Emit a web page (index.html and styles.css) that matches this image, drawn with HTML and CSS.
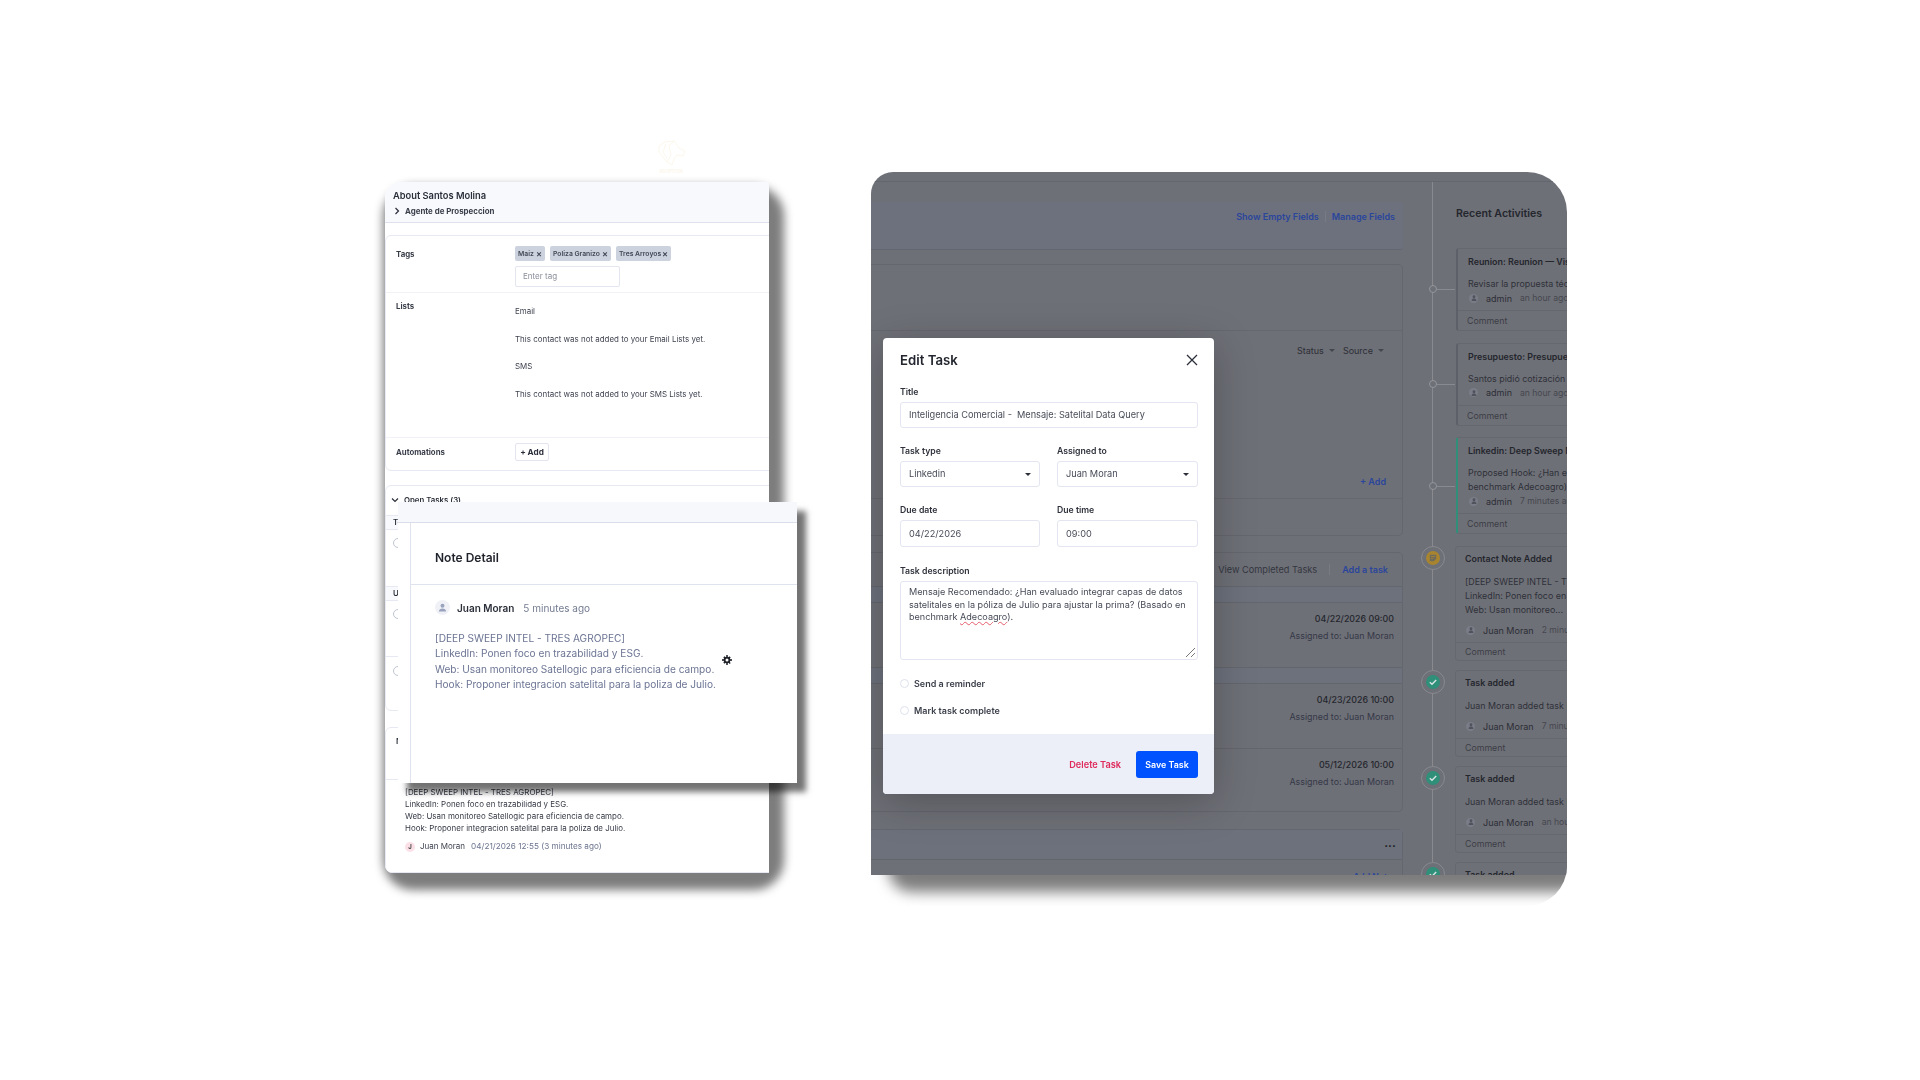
FILE: index.html
```html
<!DOCTYPE html>
<html lang="en">
<head>
    <meta charset="UTF-8">
    <title>Contact tasks and notes</title>
    <link rel="stylesheet" href="styles.css">
</head>
<body>
<div class="stage">

    <svg class="logo" viewBox="0 0 34 34" width="34" height="34" fill="none" stroke="#fbf3e3" stroke-width="0.7">
        <path d="M5 6 L11 2 L20 1 L25 8 L31 11 L29 16 L23 15 L20 19 L18 25 L13 22 L5 12 Z"/>
        <path d="M12 4 L9 12 L13 18 M20 1 L15 6 L17 15 L13 22"/>
        <text x="17" y="33" text-anchor="middle" class="logo-text">ADOPTION</text>
    </svg>

    <div class="shot shot-left">
        <div class="contact">
            <div class="contact-head">
                <div class="contact-name">About Santos Molina</div>
                <div class="contact-sub">
                    <svg width="6" height="8" viewBox="0 0 6 8" fill="none" stroke="#2b2f3a" stroke-width="1.2"><path d="M1.5 1 L4.5 4 L1.5 7"/></svg>
                    <span>Agente de Prospeccion</span>
                </div>
            </div>

            <div class="box box-about">
                <div class="row row-tags">
                    <div class="row-label">Tags</div>
                    <div class="row-value">
                        <div class="chips">
                            <span class="chip chip-a">Maiz <i>×</i></span>
                            <span class="chip chip-b">Poliza Granizo <i>×</i></span>
                            <span class="chip chip-c">Tres Arroyos <i>×</i></span>
                        </div>
                        <div class="tag-input">Enter tag</div>
                    </div>
                </div>
                <div class="row row-lists">
                    <div class="row-label">Lists</div>
                    <div class="row-value lists">
                        <div>Email</div>
                        <div>This contact was not added to your Email Lists yet.</div>
                        <div>SMS</div>
                        <div>This contact was not added to your SMS Lists yet.</div>
                    </div>
                </div>
                <div class="row row-auto">
                    <div class="row-label">Automations</div>
                    <div class="row-value"><span class="add-btn">+ Add</span></div>
                </div>
            </div>

            <div class="box box-tasks">
                <div class="tasks-title">
                    <svg width="8" height="6" viewBox="0 0 8 6" fill="none" stroke="#2b2f3a" stroke-width="1.2"><path d="M1 1.5 L4 4.5 L7 1.5"/></svg>
                    <span>Open Tasks (3)</span>
                </div>
                <div class="tasks-strip">Today</div>
                <div class="tasks-row"><span class="tick"></span></div>
                <div class="tasks-strip">Upcoming</div>
                <div class="tasks-row tasks-row-b"><span class="tick"></span></div>
                <div class="tasks-row tasks-row-c"><span class="tick"></span></div>
            </div>

            <div class="box box-notes">
                <div class="notes-head">Notes</div>
                <div class="notes-body">
                    <div class="notes-text">
                        <div>[DEEP SWEEP INTEL - TRES AGROPEC]</div>
                        <div>LinkedIn: Ponen foco en trazabilidad y ESG.</div>
                        <div>Web: Usan monitoreo Satellogic para eficiencia de campo.</div>
                        <div>Hook: Proponer integracion satelital para la poliza de Julio.</div>
                    </div>
                    <div class="notes-meta">
                        <span class="initial">J</span>
                        <span class="notes-author">Juan Moran</span>
                        <span class="notes-date">04/21/2026 12:55 (3 minutes ago)</span>
                    </div>
                </div>
            </div>
        </div>
    </div>

    <div class="note-panel">
        <div class="note-strip"></div>
        <div class="note-inner">
            <div class="note-title">Note Detail</div>
            <div class="note-content">
                <div class="note-author">
                    <span class="avatar avatar-lg">
                        <svg width="9" height="9" viewBox="0 0 10 10" fill="#9aa3bd"><circle cx="5" cy="3" r="2.2"/><path d="M1 9.5 C1 7 3 6 5 6 C7 6 9 7 9 9.5 Z"/></svg>
                    </span>
                    <b>Juan Moran</b>
                    <span>5 minutes ago</span>
                </div>
                <div class="note-text">
                    <div>[DEEP SWEEP INTEL - TRES AGROPEC]</div>
                    <div>LinkedIn: Ponen foco en trazabilidad y ESG.</div>
                    <div>Web: Usan monitoreo Satellogic para eficiencia de campo.</div>
                    <div>Hook: Proponer integracion satelital para la poliza de Julio.</div>
                </div>
            </div>
        </div>
        <svg class="gear" width="10" height="10" viewBox="0 0 10 10">
            <circle cx="5" cy="5" r="2.4" fill="none" stroke="#1c1f26" stroke-width="1.8"/>
            <path d="M4 0.2h2v1.6H4zM4 8.2h2v1.6H4zM0.2 4h1.6v2H0.2zM8.2 4h1.6v2H8.2zM1.3 2.5l1.2-1.2 1 1-1.2 1.2zM6.5 2.3l1-1 1.2 1.2-1 1zM1.3 7.5l1-1 1.2 1.2-1 1zM6.5 7.7l1-1 1.2 1.2-1 1z" fill="#1c1f26"/>
        </svg>
    </div>

    <div class="shot shot-right">
        <div class="app">
            <div class="app-top"></div>
            <div class="app-body">
                <div class="main">
                    <div class="fields-head">
                        <a>Show Empty Fields</a>
                        <span class="sep"></span>
                        <a>Manage Fields</a>
                    </div>

                    <div class="dim-card fields-card">
                        <div class="fields-a"></div>
                        <div class="fields-b">
                            <div class="filters">
                                <span>Status</span><em class="caret"></em>
                                <span>Source</span><em class="caret"></em>
                            </div>
                            <a class="add-link">+ Add</a>
                        </div>
                    </div>

                    <div class="dim-card task-card">
                        <div class="task-head">
                            <span>View Completed Tasks</span>
                            <span class="sep"></span>
                            <a>Add a task</a>
                        </div>
                        <div class="strip"></div>
                        <div class="task-row">
                            <b>04/22/2026 09:00</b>
                            <span>Assigned to: Juan Moran</span>
                        </div>
                        <div class="strip"></div>
                        <div class="task-row">
                            <b>04/23/2026 10:00</b>
                            <span>Assigned to: Juan Moran</span>
                        </div>
                        <div class="task-row task-row-line">
                            <b>05/12/2026 10:00</b>
                            <span>Assigned to: Juan Moran</span>
                        </div>
                    </div>

                    <div class="dim-card note-card">
                        <div class="note-card-head"><span class="dots">•••</span></div>
                        <div class="note-card-link"><a>Add Note</a></div>
                    </div>
                </div>

                <div class="activity">
                    <h3>Recent Activities</h3>

                    <div class="act act-plain">
                        <span class="dot"></span>
                        <div class="act-title">Reunion: Reunion — Visita técnica</div>
                        <div class="act-body">Revisar la propuesta técnica del campo</div>
                        <div class="act-who"><span class="avatar"><svg width="6" height="6" viewBox="0 0 10 10" fill="#50535c"><circle cx="5" cy="3" r="2.4"/><path d="M1 10 C1 7 3 6 5 6 C7 6 9 7 9 10 Z"/></svg></span>admin <small>an hour ago</small></div>
                        <div class="act-comment">Comment</div>
                    </div>

                    <div class="act act-plain">
                        <span class="dot"></span>
                        <div class="act-title">Presupuesto: Presupuesto póliza</div>
                        <div class="act-body">Santos pidió cotización para la póliza</div>
                        <div class="act-who"><span class="avatar"><svg width="6" height="6" viewBox="0 0 10 10" fill="#50535c"><circle cx="5" cy="3" r="2.4"/><path d="M1 10 C1 7 3 6 5 6 C7 6 9 7 9 10 Z"/></svg></span>admin <small>an hour ago</small></div>
                        <div class="act-comment">Comment</div>
                    </div>

                    <div class="act act-plain act-green">
                        <span class="dot dot-low"></span>
                        <div class="act-title">Linkedin: Deep Sweep Mensaje</div>
                        <div class="act-body">Proposed Hook: ¿Han evaluado integrar<br>benchmark Adecoagro).</div>
                        <div class="act-who"><span class="avatar"><svg width="6" height="6" viewBox="0 0 10 10" fill="#50535c"><circle cx="5" cy="3" r="2.4"/><path d="M1 10 C1 7 3 6 5 6 C7 6 9 7 9 10 Z"/></svg></span>admin <small>7 minutes ago</small></div>
                        <div class="act-comment">Comment</div>
                    </div>

                    <div class="act act-note">
                        <span class="badge badge-yellow">
                            <svg width="14" height="14" viewBox="0 0 14 14"><circle cx="7" cy="7" r="7" fill="#a8842f"/><path d="M3.8 3.8h6.4v4L7.8 10.2H3.8z" fill="#6e6a5c"/><path d="M5 5.5h4M5 7.3h2.4" stroke="#a8842f" stroke-width="0.8"/></svg>
                        </span>
                        <div class="act-title">Contact Note Added</div>
                        <div class="act-body">[DEEP SWEEP INTEL - TRES AGROPEC]<br>LinkedIn: Ponen foco en trazabilidad<br>Web: Usan monitoreo...</div>
                        <div class="act-who"><span class="avatar"><svg width="6" height="6" viewBox="0 0 10 10" fill="#50535c"><circle cx="5" cy="3" r="2.4"/><path d="M1 10 C1 7 3 6 5 6 C7 6 9 7 9 10 Z"/></svg></span>Juan Moran <small>2 minutes ago</small></div>
                        <div class="act-comment">Comment</div>
                    </div>

                    <div class="act act-note">
                        <span class="badge badge-green">
                            <svg width="14" height="14" viewBox="0 0 14 14"><circle cx="7" cy="7" r="7" fill="#2f8f78"/><path d="M3.8 7.2 L6 9.3 L10.2 5" fill="none" stroke="#d8e4e4" stroke-width="1.4"/></svg>
                        </span>
                        <div class="act-title">Task added</div>
                        <div class="act-body">Juan Moran added task Inteligencia</div>
                        <div class="act-who"><span class="avatar"><svg width="6" height="6" viewBox="0 0 10 10" fill="#50535c"><circle cx="5" cy="3" r="2.4"/><path d="M1 10 C1 7 3 6 5 6 C7 6 9 7 9 10 Z"/></svg></span>Juan Moran <small>7 minutes ago</small></div>
                        <div class="act-comment">Comment</div>
                    </div>

                    <div class="act act-note">
                        <span class="badge badge-green">
                            <svg width="14" height="14" viewBox="0 0 14 14"><circle cx="7" cy="7" r="7" fill="#2f8f78"/><path d="M3.8 7.2 L6 9.3 L10.2 5" fill="none" stroke="#d8e4e4" stroke-width="1.4"/></svg>
                        </span>
                        <div class="act-title">Task added</div>
                        <div class="act-body">Juan Moran added task Inteligencia</div>
                        <div class="act-who"><span class="avatar"><svg width="6" height="6" viewBox="0 0 10 10" fill="#50535c"><circle cx="5" cy="3" r="2.4"/><path d="M1 10 C1 7 3 6 5 6 C7 6 9 7 9 10 Z"/></svg></span>Juan Moran <small>an hour ago</small></div>
                        <div class="act-comment">Comment</div>
                    </div>

                    <div class="act act-note">
                        <span class="badge badge-green">
                            <svg width="14" height="14" viewBox="0 0 14 14"><circle cx="7" cy="7" r="7" fill="#2f8f78"/><path d="M3.8 7.2 L6 9.3 L10.2 5" fill="none" stroke="#d8e4e4" stroke-width="1.4"/></svg>
                        </span>
                        <div class="act-title">Task added</div>
                    </div>
                </div>
            </div>

            <div class="modal">
                <div class="modal-body">
                    <div class="modal-head">
                        <h2>Edit Task</h2>
                        <svg width="12" height="12" viewBox="0 0 12 12" stroke="#2b2f3a" stroke-width="1.3"><path d="M1 1 L11 11 M11 1 L1 11"/></svg>
                    </div>
                    <label class="field-label">Title</label>
                    <div class="input">Inteligencia Comercial -&nbsp; Mensaje: Satelital Data Query</div>
                    <div class="field-grid">
                        <div>
                            <label class="field-label">Task type</label>
                            <div class="input input-select">Linkedin<em class="caret caret-dark"></em></div>
                        </div>
                        <div>
                            <label class="field-label">Assigned to</label>
                            <div class="input input-select">Juan Moran<em class="caret caret-dark"></em></div>
                        </div>
                        <div>
                            <label class="field-label">Due date</label>
                            <div class="input input-tall">04/22/2026</div>
                        </div>
                        <div>
                            <label class="field-label">Due time</label>
                            <div class="input input-tall">09:00</div>
                        </div>
                    </div>
                    <label class="field-label">Task description</label>
                    <div class="textarea">
                        Mensaje Recomendado: ¿Han evaluado integrar capas de datos<br>
                        satelitales en la póliza de Julio para ajustar la prima? (Basado en<br>
                        benchmark <span class="misspelled">Adecoagro</span>).
                        <svg class="grip" width="11" height="11" viewBox="0 0 11 11" stroke="#555" stroke-width="0.8"><path d="M1 10 L10 1 M6 10 L10 6"/></svg>
                    </div>
                    <div class="checks">
                        <div class="check-row"><span class="check"></span>Send a reminder</div>
                        <div class="check-row"><span class="check"></span>Mark task complete</div>
                    </div>
                </div>
                <div class="modal-foot">
                    <a class="delete">Delete Task</a>
                    <button class="save">Save Task</button>
                </div>
            </div>
        </div>
    </div>
</div>
</body>
</html>
```

FILE: styles.css
```css
* {
    box-sizing: border-box;
}

body {
    margin: 0;
    background-color: #fff;
    font-family: "Inter", "Liberation Sans", sans-serif;
    color: #2b2f3a;
    overflow: hidden;
}

.stage {
    position: relative;
    width: 1920px;
    height: 1080px;
    overflow: hidden;
}

a {
    color: #2a459c;
}

.logo {
    position: absolute;
    left: 654px;
    top: 140px;
}

.logo-text {
    font-size: 4.5px;
    fill: #fbf3e3;
    stroke: none;
}

/* left screenshot */
.shot-left {
    position: absolute;
    left: 380px;
    top: 178px;
    width: 420px;
    height: 725px;
}

.shot-left::before {
    content: "";
    position: absolute;
    left: 3px;
    top: 8px;
    width: 401px;
    height: 704px;
    border-radius: 30px;
    background-color: #7d7d7d;
    filter: blur(5px);
}

.contact {
    position: absolute;
    left: 5px;
    top: 4px;
    width: 384px;
    height: 691px;
    overflow: hidden;
    background-color: #fff;
    border-radius: 16px 0 0 8px;
    filter: blur(0.3px);
}

.contact-head {
    height: 41px;
    padding: 7px 8px 0;
    background-color: #f8f9fd;
    border-bottom: 1px solid #dfe2ec;
}

.contact-name {
    font-size: 9.3px;
    font-weight: 600;
    line-height: 13px;
}

.contact-sub {
    display: flex;
    align-items: center;
    gap: 5px;
    margin-top: 4px;
    padding-left: 1px;
    font-size: 7.9px;
    font-weight: 700;
    line-height: 10px;
    color: #3a3e4a;
}

.box {
    border: 1px solid #e6e9f2;
    border-radius: 6px 0 0 6px;
    margin-right: -10px;
    background-color: #fff;
}

.box-about {
    margin-top: 12px;
    height: 236px;
}

.row {
    display: flex;
    padding-left: 10px;
    border-bottom: 1px solid #f0f2f7;
}

.row:last-child {
    border-bottom: none;
}

.row-label {
    width: 119px;
    flex: none;
    font-size: 7.8px;
    font-weight: 700;
    color: #3a3e4a;
}

.row-tags {
    height: 57px;
    padding-top: 13px;
}

.row-lists {
    height: 145px;
    padding-top: 8px;
}

.row-auto {
    height: 32px;
    padding-bottom: 4px;
    align-items: center;
}

.chips {
    display: flex;
    gap: 5px;
    margin-top: -3px;
}

.chip {
    display: flex;
    align-items: center;
    justify-content: space-between;
    height: 15px;
    padding: 0 3px;
    border-radius: 2px;
    background-color: #ccd2de;
    font-size: 6.8px;
    font-weight: 600;
    color: #434857;
}

.chip i {
    font-style: normal;
    font-size: 9px;
}

.chip-a { width: 30px; }
.chip-b { width: 61px; }
.chip-c { width: 55px; }

.tag-input {
    width: 105px;
    height: 21px;
    margin-top: 5px;
    padding-left: 7px;
    border: 1px solid #e3e6ef;
    border-radius: 2px;
    font-size: 8px;
    line-height: 19px;
    color: #8b8f9a;
}

.lists {
    padding-top: 3px;
    font-size: 7.95px;
    color: #3f4350;
}

.lists div {
    height: 27.6px;
    line-height: 14px;
}

.add-btn {
    display: block;
    width: 34px;
    height: 18px;
    border: 1px solid #e3e6ef;
    border-radius: 2px;
    font-size: 8.2px;
    font-weight: 700;
    line-height: 16px;
    text-align: center;
}

.box-tasks {
    margin-top: 14px;
    height: 226px;
    overflow: hidden;
}

.tasks-title {
    display: flex;
    align-items: center;
    gap: 5px;
    height: 29px;
    padding: 0 5px 1px;
    font-size: 7.8px;
    font-weight: 600;
}

.tasks-strip {
    height: 15px;
    padding-left: 7px;
    background-color: #f8f9fc;
    border-top: 1px solid #e6e9f2;
    border-bottom: 1px solid #e6e9f2;
    font-size: 7.8px;
    font-weight: 600;
    line-height: 13px;
}

.tasks-row {
    height: 56px;
    padding: 8px 0 0 7px;
}

.tasks-row-b {
    height: 55px;
    padding-top: 8px;
}

.tasks-row-c {
    border-top: 1px solid #e6e9f2;
    padding-top: 9px;
}

.tick {
    display: block;
    width: 10px;
    height: 10px;
    border: 1px solid #bfc5d3;
    border-radius: 50%;
}

.box-notes {
    margin-top: 16px;
    height: 146px;
}

.notes-head {
    height: 52px;
    padding: 8px 0 0 10px;
    border-bottom: 1px solid #e6e9f2;
    font-size: 8px;
    font-weight: 600;
}

.notes-body {
    padding: 6px 0 0 19px;
}

.notes-text {
    font-size: 7.95px;
    line-height: 12px;
    color: #363a46;
}

.notes-meta {
    display: flex;
    align-items: center;
    margin-top: 7px;
    font-size: 8px;
    line-height: 11px;
}

.initial {
    width: 10px;
    height: 10px;
    margin-right: 5px;
    border-radius: 50%;
    background-color: #fbe1e7;
    font-size: 6px;
    font-weight: 700;
    line-height: 10px;
    text-align: center;
    color: #444;
}

.notes-author {
    margin-right: 6px;
    color: #3f4350;
}

.notes-date {
    font-size: 8.2px;
    color: #6d7590;
}

/* note detail panel */
.note-panel {
    position: absolute;
    left: 398px;
    top: 502px;
    width: 399px;
    height: 281px;
    background-color: #fff;
    box-shadow: 9px 9px 6px rgba(0, 0, 0, 0.55);
    filter: blur(0.3px);
}

.note-strip {
    height: 21px;
    background-color: #f7f8fc;
    border-bottom: 1px solid #d9deea;
}

.note-inner {
    height: 260px;
    margin-left: 12px;
    border-left: 1px solid #dfe3ee;
}

.note-title {
    height: 62px;
    padding: 25px 0 0 24px;
    border-bottom: 1px solid #dfe3ee;
    font-size: 12px;
    font-weight: 600;
    line-height: 20px;
    color: #1f222b;
}

.note-content {
    padding: 15px 0 0 24px;
}

.note-author {
    display: flex;
    align-items: center;
    height: 15px;
    font-size: 10px;
    color: #747c92;
}

.note-author b {
    margin: 0 9px 0 7px;
    font-weight: 600;
    color: #2b2f3a;
}

.note-text {
    margin-top: 16px;
    font-size: 10.15px;
    line-height: 15.3px;
    color: #6c7594;
}

.gear {
    position: absolute;
    left: 324px;
    top: 153px;
}

.avatar {
    display: inline-flex;
    align-items: center;
    justify-content: center;
    border-radius: 50%;
}

.avatar-lg {
    width: 15px;
    height: 15px;
    background-color: #eff1f7;
}

/* right screenshot, app behind a dark overlay */
.shot-right {
    position: absolute;
    left: 871px;
    top: 172px;
    width: 696px;
    height: 734px;
    overflow: hidden;
    border-radius: 22px 40px 40px 0;
}

.shot-right::before {
    content: "";
    position: absolute;
    left: 17px;
    top: 640px;
    width: 700px;
    height: 80px;
    border-radius: 24px;
    background-color: #7d7d7d;
    filter: blur(7px);
}

.app {
    position: relative;
    height: 703px;
    overflow: hidden;
    background-color: #6e7077;
    font-size: 8.8px;
    color: #34363e;
}

.app-top {
    height: 10px;
    border-bottom: 1px solid #64666d;
}

.app-body {
    display: flex;
    height: 693px;
}

.main {
    flex: none;
    width: 562px;
    padding: 20px 29px 0 0;
    border-right: 1px solid #888a90;
}

.fields-head {
    display: flex;
    justify-content: flex-end;
    align-items: center;
    gap: 5px;
    height: 48px;
    padding: 0 8px 18px;
    background-color: #6d717d;
    border-radius: 0 3px 3px 0;
    border-bottom: 1px solid #63666e;
    font-size: 9px;
    font-weight: 600;
}

.sep {
    width: 1px;
    height: 11px;
    margin: 0 1px;
    background-color: #787b84;
}

.dim-card {
    border: 1px solid #65676e;
    border-left: none;
    border-radius: 0 5px 5px 0;
}

.fields-card {
    height: 272px;
    margin-top: 14px;
}

.fields-a {
    height: 66px;
    border-bottom: 1px solid #66686f;
}

.fields-b {
    height: 168px;
    padding: 14px 18px 0 0;
    border-bottom: 1px solid #66686f;
}

.filters {
    display: flex;
    justify-content: flex-end;
    align-items: center;
    gap: 3px;
    height: 11px;
    font-size: 9px;
    color: #2c2e36;
}

.caret {
    display: inline-block;
    width: 0;
    height: 0;
    margin: 0 5px 0 2px;
    border-left: 3px solid transparent;
    border-right: 3px solid transparent;
    border-top: 3px solid #44464e;
}

.filters .caret:last-child {
    margin-right: 0;
}

.add-link {
    display: block;
    margin: 120px -2px 0 0;
    font-size: 9px;
    font-weight: 600;
    line-height: 12px;
    text-align: right;
}

.task-card {
    height: 260px;
    margin-top: 16px;
}

.task-head {
    display: flex;
    justify-content: flex-end;
    align-items: center;
    gap: 11px;
    height: 33px;
    padding-right: 14px;
    font-size: 9.2px;
    color: #34363f;
}

.task-head a {
    font-size: 9px;
    font-weight: 600;
}

.strip {
    height: 17px;
    background-color: #6c717c;
    border-top: 1px solid #64666d;
    border-bottom: 1px solid #64666d;
}

.task-row {
    display: flex;
    flex-direction: column;
    align-items: flex-end;
    height: 64px;
    padding: 10px 8px 0 0;
    font-size: 8.9px;
    line-height: 12px;
    color: #353848;
}

.task-row b {
    margin-bottom: 5px;
    font-weight: 500;
    color: #24262d;
}

.task-row-line {
    border-top: 1px solid #64666d;
}

.note-card {
    height: 80px;
    margin-top: 17px;
}

.note-card-head {
    height: 30px;
    padding-right: 6px;
    background-color: #6c717c;
    border-bottom: 1px solid #64666d;
    line-height: 29px;
    text-align: right;
}

.dots {
    font-size: 6px;
    color: #111;
    letter-spacing: 0.5px;
}

.note-card-link {
    padding: 12px 10px 0 0;
    font-size: 8.6px;
    font-weight: 600;
    text-align: right;
}

.activity {
    flex: 1;
    padding: 24px 0 0 23px;
}

.activity h3 {
    height: 16px;
    margin: 0 0 26px;
    font-size: 10.6px;
    font-weight: 600;
    line-height: 16px;
    color: #24262d;
}

.act {
    position: relative;
    width: 220px;
    border: 1px solid #66686f;
    border-radius: 3px 0 0 3px;
}

.act-plain {
    margin-bottom: 11.5px;
    border-left: 2px solid #5d6068;
    padding-top: 6px;
}

.act-green {
    margin-bottom: 12px;
    border-left-color: #2f8f78;
}

.act-title {
    padding-left: 10px;
    height: 14px;
    font-size: 8.9px;
    font-weight: 600;
    line-height: 14px;
    white-space: nowrap;
    color: #24262d;
}

.act-body {
    margin-top: 8px;
    padding-left: 10px;
    font-size: 8.9px;
    line-height: 14px;
    white-space: nowrap;
    color: #2f3139;
}

.act-who {
    display: flex;
    align-items: center;
    height: 14px;
    padding-left: 11px;
    font-size: 9px;
    white-space: nowrap;
    color: #2c2e36;
}

.act-who .avatar {
    width: 9px;
    height: 9px;
    margin-right: 8px;
    background-color: #7a7d87;
}

.act-who small {
    margin-left: 8px;
    font-size: 8.6px;
    color: #45474f;
}

.act-comment {
    height: 20px;
    margin-top: 5px;
    padding-left: 9px;
    border-top: 1px solid #66686f;
    font-size: 8.8px;
    line-height: 19px;
    color: #3c3e46;
}

.dot {
    position: absolute;
    left: -29px;
    top: 36px;
    width: 8px;
    height: 8px;
    border: 1px solid #94969c;
    border-radius: 50%;
    background-color: #6e7077;
}

.dot-low {
    top: 44px;
}

.dot::after {
    content: "";
    position: absolute;
    left: 7px;
    top: 3px;
    width: 18px;
    height: 1px;
    background-color: #888a90;
}

.act-note {
    margin: 0 0 9px -1px;
    padding-top: 5px;
}

.act-note .act-title,
.act-note .act-body {
    padding-left: 9px;
}

.act-note .act-body {
    margin-top: 9px;
}

.act-note .act-who {
    margin-top: 6px;
    padding-left: 10px;
}

.act-note .act-comment {
    height: 18px;
    line-height: 17px;
}

.badge {
    position: absolute;
    left: -35px;
    top: -1px;
    display: flex;
    align-items: center;
    justify-content: center;
    width: 24px;
    height: 24px;
    border: 1px solid #888a90;
    border-radius: 50%;
    background-color: #6e7077;
}

/* edit task modal */
.modal {
    position: absolute;
    left: 12px;
    top: 166px;
    width: 331px;
    height: 456px;
    background-color: #fff;
    border-radius: 4px;
    box-shadow: 0 8px 40px rgba(0, 0, 0, 0.25);
    color: #3b3f4a;
    filter: blur(0.3px);
}

.modal-body {
    height: 396px;
    padding: 12px 16px 0 17px;
}

.modal-head {
    display: flex;
    justify-content: space-between;
    align-items: center;
    height: 20px;
    margin-bottom: 15px;
}

.modal-head h2 {
    margin: 0;
    font-size: 13.2px;
    font-weight: 600;
    color: #23262f;
}

.field-label {
    display: block;
    height: 14px;
    margin-bottom: 3px;
    font-size: 8.7px;
    font-weight: 600;
    line-height: 14px;
    color: #2f323c;
}

.input {
    height: 26px;
    padding-left: 8px;
    border: 1px solid #e3e6f0;
    border-radius: 3px;
    font-size: 9.2px;
    line-height: 24px;
    color: #474b57;
}

.input-tall {
    height: 27px;
    line-height: 25px;
}

.input-select {
    display: flex;
    justify-content: space-between;
    align-items: center;
    padding-right: 8px;
}

.caret-dark {
    margin: 0;
    border-top-color: #2b2f3a;
}

.field-grid {
    display: grid;
    grid-template-columns: 140px 141px;
    column-gap: 17px;
    row-gap: 16px;
    margin: 16px 0 17px;
}

.textarea {
    position: relative;
    height: 79px;
    padding: 4px 8px;
    border: 1px solid #e3e6f0;
    border-radius: 3px;
    font-size: 9.1px;
    line-height: 12.6px;
    color: #474b57;
}

.misspelled {
    text-decoration: underline wavy #e45c6a 0.7px;
}

.grip {
    position: absolute;
    right: 1px;
    bottom: 1px;
}

.checks {
    padding-top: 4px;
}

.check-row {
    display: flex;
    align-items: center;
    gap: 5px;
    height: 16px;
    margin-top: 11px;
    font-size: 9px;
    font-weight: 600;
    color: #3b3f4a;
}

.check {
    width: 9px;
    height: 9px;
    border: 1px solid #dfe2ec;
    border-radius: 50%;
}

.modal-foot {
    display: flex;
    justify-content: flex-end;
    align-items: center;
    gap: 15px;
    height: 60px;
    padding-right: 16px;
    background-color: #eceff7;
    border-radius: 0 0 4px 4px;
}

.delete {
    font-size: 9.2px;
    font-weight: 600;
    color: #df2a5c;
}

.save {
    width: 62px;
    height: 27px;
    padding: 0;
    border: none;
    border-radius: 3px;
    background-color: #0052ff;
    font-family: inherit;
    font-size: 8.9px;
    font-weight: 600;
    color: #fff;
}
```
